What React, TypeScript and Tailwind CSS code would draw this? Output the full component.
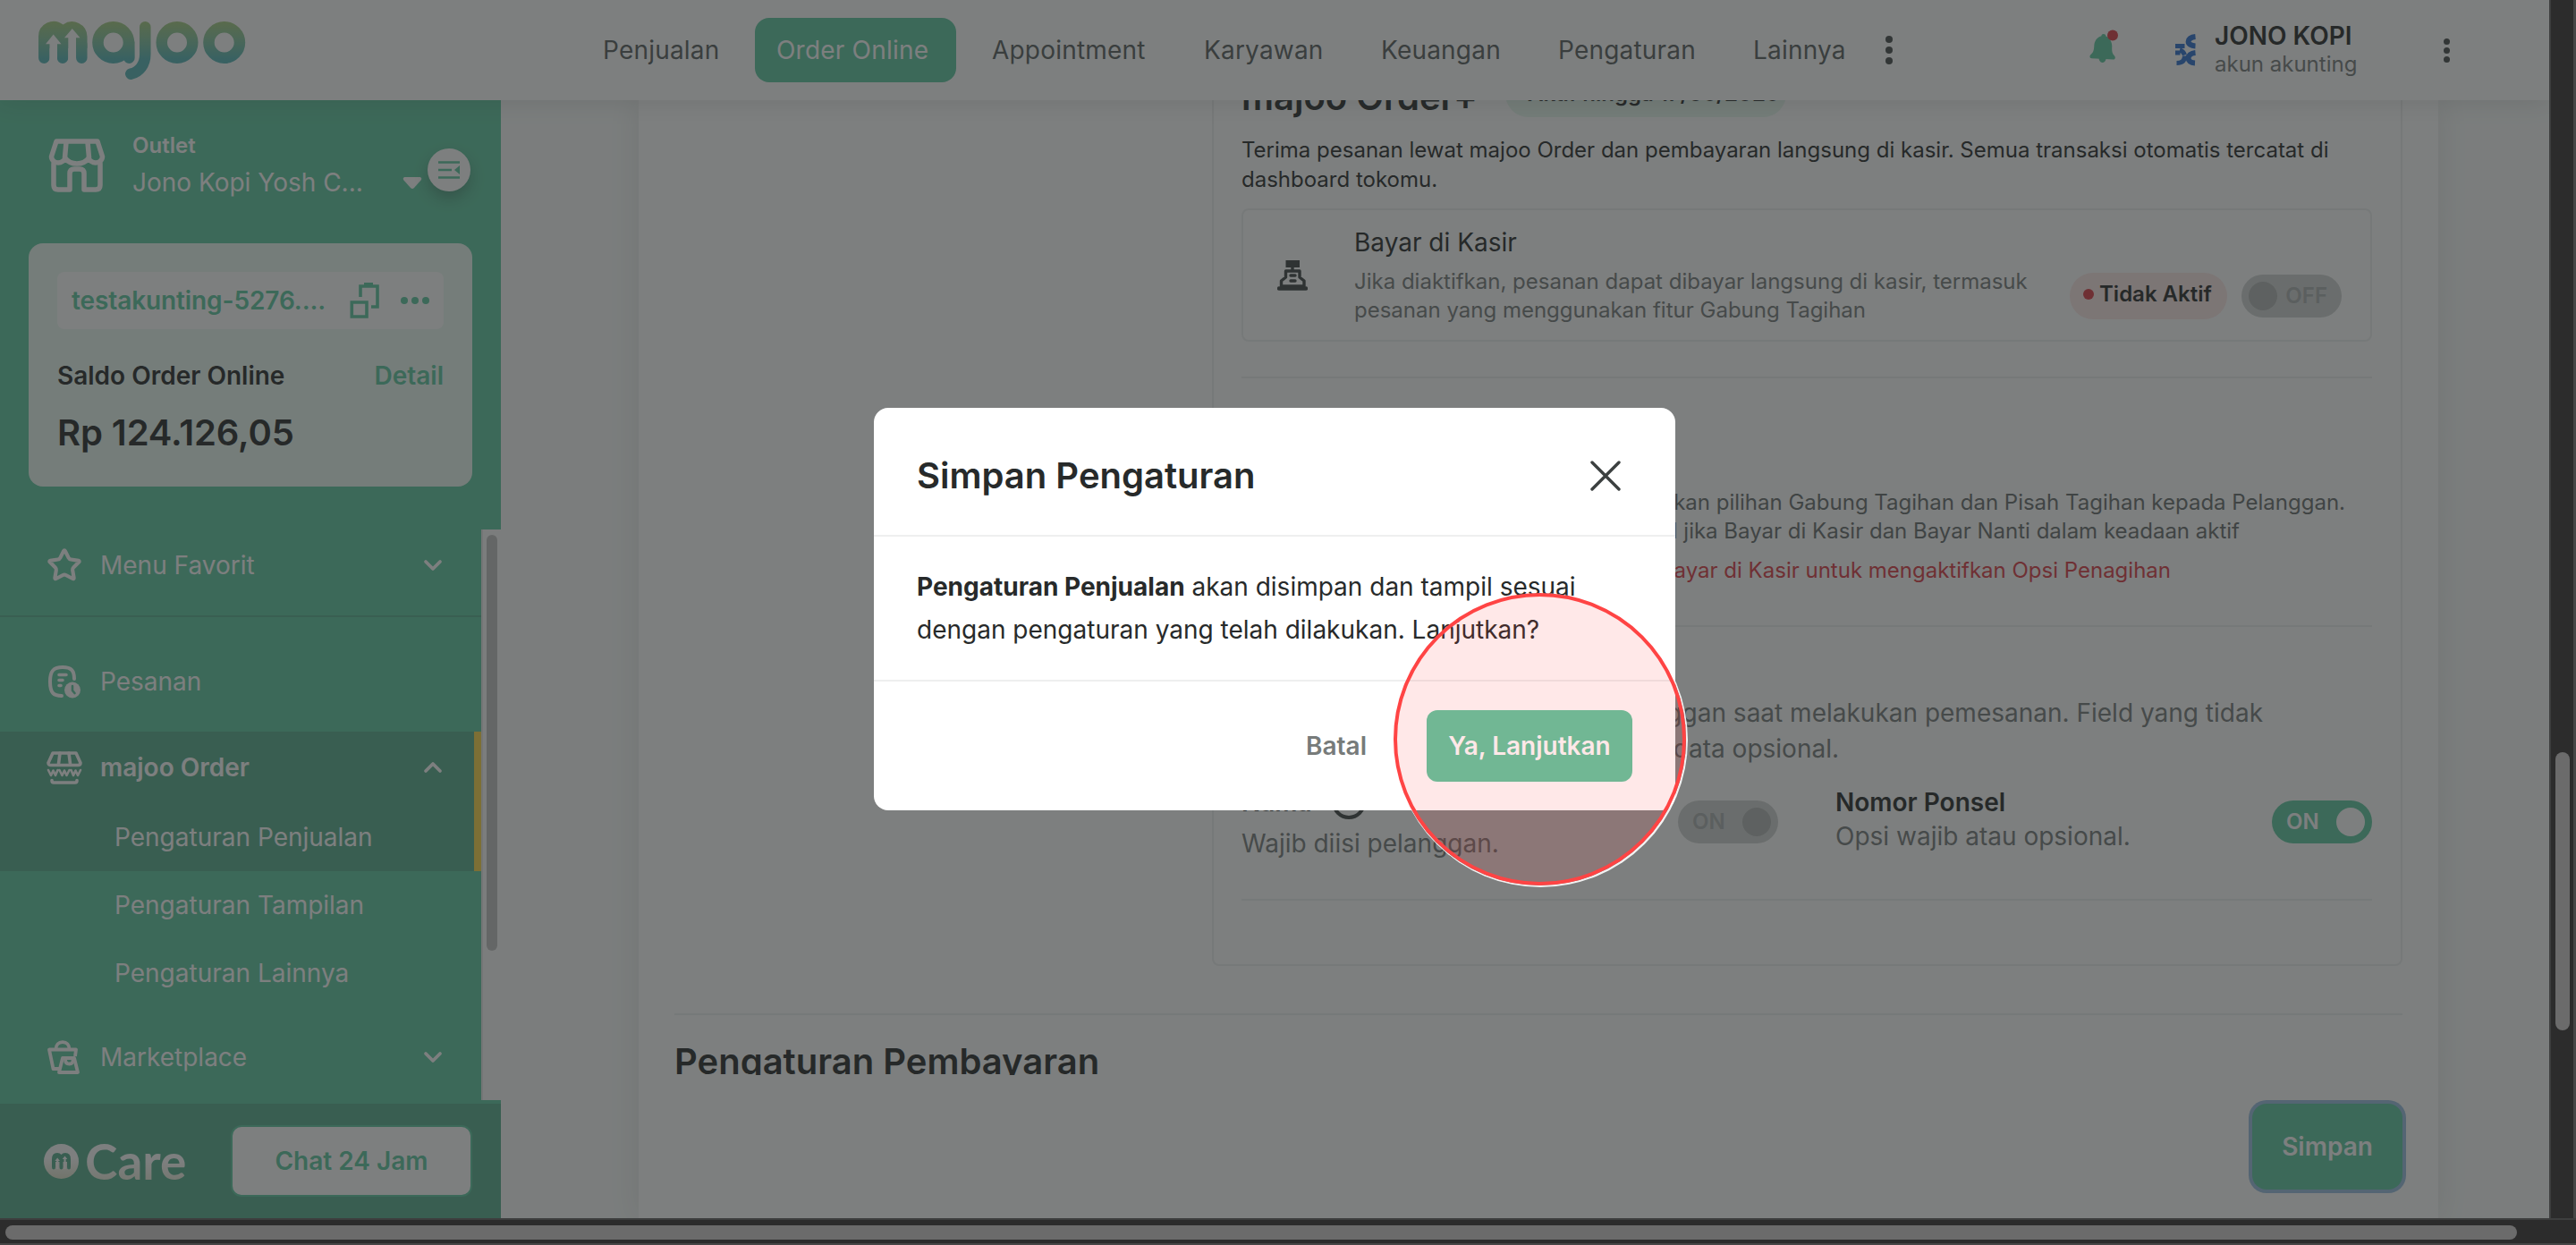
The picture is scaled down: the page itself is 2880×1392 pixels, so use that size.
import { ChevronDown, ChevronUp, Star } from "lucide-react";
import clsx from "clsx";
import type { ReactNode } from "react";

const navItems = [
  { label: "Penjualan", className: "w-[172px] pl-[2px]" },
  { label: "Order Online", active: true, className: "w-[225px] mr-10 pl-[24px]" },
  { label: "Appointment", className: "w-[237px]" },
  { label: "Karyawan", className: "w-[198px]" },
  { label: "Keuangan", className: "w-[198px]" },
  { label: "Pengaturan", className: "w-[218px]" },
  { label: "Lainnya", className: "w-[148px]" },
];

const MajooLogo = () => (
  <svg width="236" height="70" viewBox="42 22 236 70" fill="none">
    <defs>
      <linearGradient id="majoo" gradientUnits="userSpaceOnUse" x1="0" y1="24" x2="0" y2="66">
        <stop stopColor="#a6cc80" />
        <stop offset="0.450" stopColor="#86c49c" />
        <stop offset="1" stopColor="#55b5b6" />
      </linearGradient>
    </defs>
    {/* m with the two arrows cut out */}
    <path d="M43 54V41a17 17 0 0 1 27.500-13.500A17 17 0 0 1 97.500 41V54Z" fill="url(#majoo)" />
    <g stroke="url(#majoo)" strokeWidth="12.500" strokeLinecap="round">
      <path d="M49.250 50L49.300 64.700M70 50L70.050 64.700M91.250 50L91.300 64.700" />
      <circle cx="126.700" cy="47.500" r="17.250" />
      <path d="M144.300 47.500L144.400 64.700" />
      <path d="M162.300 30.200V60.500C162.300 72 156 80.500 146.300 82.700" />
      <circle cx="198" cy="47.500" r="17.250" />
      <circle cx="250.700" cy="47.500" r="17.250" />
    </g>
    <path d="M59.700 38.500L68.500 49.300H64V72H55.500V49.300H51ZM80.800 32L89.500 42.300H85V72H76.300V42.300H72Z" fill="#fff" />
  </svg>
);

const StoreIcon = () => (
  <svg width="64" height="60" viewBox="0 0 64 60" fill="none" stroke="#fff" strokeWidth="5.500" strokeLinejoin="round" strokeLinecap="round">
    <path d="M9 3H55L60.500 20C60.500 24 57 27 53 27C49 27 46 24 45 22C42 26 38 28 32 28C26 28 22 26 19 22C18 24 15 27 11 27C7 27 3.500 24 3.500 20Z" />
    <path d="M20 4L18.500 21M44 4L45.500 21" />
    <path d="M6 28V52Q6 57 11 57H24V39Q24 34 29 34H35Q40 34 40 39V57H53Q58 57 58 52V28" />
  </svg>
);

const OrdersIcon = () => (
  <svg width="40" height="40" viewBox="0 0 40 40" fill="none" stroke="#fff" strokeWidth="4" strokeLinecap="round">
    <path d="M17 36C8 36 4 33 4 20C4 8 8 4 18 4C28 4 31 8 31 17" />
    <path d="M14 12.500H22M14 18.500H18M14 24.500H16" strokeWidth="3.600" />
    <circle cx="29" cy="29.500" r="9" fill="#fff" stroke="none" />
    <path d="M29 25V30L31.500 33" stroke="#5ec8a0" strokeWidth="2.600" />
  </svg>
);

const WebShopIcon = () => (
  <svg width="40" height="38" viewBox="0 0 40 38" fill="none" stroke="#fff" strokeWidth="3.600" strokeLinejoin="round" strokeLinecap="round">
    <path d="M7 3H33L38 14Q38 16.500 35 16.500H5Q2 16.500 2 14Z" />
    <path d="M15 3L13.500 15M25 3L26.500 15" />
    <path d="M2 22L5 28L7.500 22.500L10 28L12.500 22M14.500 22L17.500 28L20 22.500L22.500 28L25.500 22M27.500 22L30 28L32.500 22.500L35 28L38 22" strokeWidth="2.600" />
    <path d="M6 33.500Q6 36 8 36H32Q34 36 34 33.500" />
  </svg>
);

const MarketIcon = () => (
  <svg width="38" height="38" viewBox="0 0 38 38" fill="none" stroke="#fff" strokeWidth="3.800" strokeLinejoin="round">
    <path d="M10.500 10.500C10.500 5 13.500 2.200 18 2.200S25.500 5 25.500 10.500" />
    <path d="M16 32H7.500L3 10.500H33L32 18" />
    <path d="M18 20H31L35 36H14Z" />
    <path d="M21 21.500Q21 26.500 25.500 26.500T29.500 21.500" />
  </svg>
);

const CashierIcon = () => (
  <svg width="34" height="34" viewBox="0 0 34 34" fill="none" stroke="#3c4342" strokeWidth="3.400" strokeLinejoin="round">
    <path d="M9.500 0H25V8H9.500Z" fill="#3c4342" stroke="none" />
    <path d="M17 8V12M9.500 12H25V19L30 23V29H4.500V23L9.500 19Z" />
    <path d="M15 17H20M15 23H20" strokeLinecap="round" />
    <path d="M2 31.500H32" strokeWidth="4.500" strokeLinecap="round" />
  </svg>
);

const CopyLinkIcon = () => (
  <svg width="34" height="40" viewBox="0 0 34 40" fill="none" stroke="#5ec8a0" strokeWidth="3.600">
    <path d="M12 16V4H31V27H24" />
    <path d="M16 2.500H26" strokeWidth="5" />
    <path d="M2.300 22H19V38H2.300Z" />
  </svg>
);

const BellIcon = () => (
  <svg width="34" height="42" viewBox="0 0 34 42">
    <g transform="rotate(3 15 24)">
      <path d="M15 5C13.500 5 12.500 6 12.500 7.300C7 9 5 14 5 19C5 25 4 26.500 1.500 29C0 31 1 33 3 33H27C29 33 30 31 28.500 29C26 26.500 25 25 25 19C25 14 22.500 9 17.500 7.300C17.500 6 16.500 5 15 5Z" fill="#5ec8a0" />
      <path d="M11 32a4 5 0 0 0 8 0Z" fill="#5ec8a0" />
    </g>
    <circle cx="26" cy="6.500" r="6" fill="#dc3a44" />
  </svg>
);

const OutletLogo = () => (
  <svg width="24" height="38" viewBox="0 0 24 38" fill="none" stroke="#2b6fd0" strokeWidth="6">
    <path d="M22.500 4C12 5 12 14 22.500 14.500M22.500 22C12 23 12 33 22 33.500" />
    <path d="M0 14.500H10.500" strokeWidth="5" />
    <path d="M0 22H5.500M10.500 25.500C10.500 31 7 33.500 1.500 33.500M5 19Q9 20 10.500 24.500" strokeWidth="5" />
  </svg>
);

const Toggle = ({ label, on, muted }: { label: string; on?: boolean; muted?: boolean }) => (
  <div
    className={clsx(
      "flex h-12 w-[112px] shrink-0 items-center justify-between rounded-full text-[24px] font-semibold",
      on ? "pl-4 pr-2" : "flex-row-reverse pl-2 pr-4",
      muted ? "bg-[#d0d3d2] text-[#abaeae]" : "bg-[#5ec8a0] text-white",
    )}
  >
    <span>{label}</span>
    <span className={clsx("size-8 rounded-full", muted ? "bg-[#b1b4b3]" : "bg-white")} />
  </div>
);

const Dots = ({ size }: { size: "sm" | "lg" }) => (
  <div className={clsx("flex flex-col items-center", size === "lg" ? "gap-1" : "gap-[3px]")}>
    {[0, 1, 2].map((i) => (
      <span key={i} className={clsx("rounded-full bg-[#454a49]", size === "lg" ? "size-2" : "size-[7px]")} />
    ))}
  </div>
);

const Header = () => (
  <header className="relative z-10 flex h-[112px] shrink-0 items-center bg-white shadow-[0_4px_24px_rgba(39,42,42,0.12)]">
    <div className="h-[68px] w-[672px] pl-[42px]">
      <MajooLogo />
    </div>
    <nav className="flex items-center">
      {navItems.map(({ label, active, className }) => (
        <a
          key={label}
          className={clsx(
            "flex h-[72px] items-center text-[28px] tracking-[0.2px]",
            active ? "rounded-2xl bg-[#5ec8a0] text-white" : "text-[#575d5c]",
            className,
          )}
        >
          {label}
        </a>
      ))}
      <Dots size="lg" />
    </nav>
    <div className="-mt-1 ml-[220px] h-[42px] w-[96px]">
      <BellIcon />
    </div>
    <div className="flex items-center">
      <OutletLogo />
      <div className="ml-5 w-[256px]">
        <p className="text-[28px] leading-8 font-semibold text-[#272a2a]">JONO KOPI</p>
        <p className="text-[24px] leading-8 text-[#777b7a]">akun akunting</p>
      </div>
      <Dots size="sm" />
    </div>
  </header>
);

const MenuRow = ({ icon, label, bold, trailing, className }: { icon: ReactNode; label: string; bold?: boolean; trailing?: ReactNode; className?: string }) => (
  <div className={clsx("flex items-center", className)}>
    <span className="flex w-[112px] shrink-0 pl-[52px]">{icon}</span>
    <span className={clsx("w-[356px] text-[28px]", bold && "font-semibold")}>{label}</span>
    {trailing}
  </div>
);

const SubItem = ({ label }: { label: string }) => (
  <div className="flex h-[76px] items-center pl-[128px] text-[28px]">{label}</div>
);

const Sidebar = () => (
  <aside className="flex w-[560px] shrink-0 flex-col bg-[#5ec8a0] text-white">
    <div className="flex h-[160px] items-start pt-[43px] pl-[54px]">
      <StoreIcon />
      <div className="-mt-2 ml-[30px] w-[302px]">
        <p className="text-[24px] leading-8 font-semibold">Outlet</p>
        <p className="mt-[5px] text-[28px] leading-10">Jono Kopi Yosh C...</p>
      </div>
      <svg width="22" height="14" viewBox="0 0 22 14" className="mt-[43px]">
        <path d="M2 0H20Q22 1 21 3L13 12Q11 14 9 12L1 3Q0 1 2 0Z" fill="#fff" />
      </svg>
      <span className="mt-[11px] ml-[6px] flex size-12 items-center justify-center rounded-full bg-white shadow-[0_8px_16px_rgba(39,42,42,0.3)]">
        <svg width="24" height="20" viewBox="0 0 24 20" stroke="#5ec8a0" strokeWidth="2.400">
          <path d="M0 1.500H24M0 10H15M0 18.500H24" />
          <path d="M24 5V15L18 10Z" fill="#5ec8a0" stroke="none" />
        </svg>
      </span>
    </div>

    <div className="mx-8 h-[272px] shrink-0 rounded-2xl bg-[#ecf9f3] px-8 pt-8 text-[#272a2a]">
      <div className="flex h-16 items-center rounded-lg bg-white pr-4 pl-4 text-[#5ec8a0]">
        <span className="w-[311px] text-[28px] font-semibold tracking-[-0.1px]">testakunting-5276....</span>
        <CopyLinkIcon />
        <span className="ml-auto flex gap-1">
          <i className="size-2 rounded-full bg-current" />
          <i className="size-2 rounded-full bg-current" />
          <i className="size-2 rounded-full bg-current" />
        </span>
      </div>
      <div className="mt-8 flex h-10 items-center justify-between text-[28px] font-semibold">
        <span>Saldo Order Online</span>
        <span className="text-[#5ec8a0]">Detail</span>
      </div>
      <p className="mt-5 text-[40px] leading-[48px] font-semibold tracking-[-0.1px]">Rp 124.126,05</p>
    </div>

    <div className="mt-12 flex h-[638px] shrink-0">
      <div className="flex w-[538px] flex-col">
        <MenuRow className="h-[80px]" icon={<Star size={40} strokeWidth={2.500} />} label="Menu Favorit" trailing={<ChevronDown size={32} strokeWidth={2.800} />} />
        <div className="mt-[16px] h-[2px] bg-[#55b08e]" />
        <MenuRow className="mt-[32px] h-[80px]" icon={<OrdersIcon />} label="Pesanan" />
        <div className="mt-[16px] h-[156px] border-r-8 border-[#fed746] bg-[#55ad8d]">
          <MenuRow className="h-[80px]" icon={<WebShopIcon />} label="majoo Order" bold trailing={<ChevronUp size={32} strokeWidth={2.800} />} />
          <SubItem label="Pengaturan Penjualan" />
        </div>
        <SubItem label="Pengaturan Tampilan" />
        <SubItem label="Pengaturan Lainnya" />
        <MenuRow className="mt-[16px] h-[80px]" icon={<MarketIcon />} label="Marketplace" trailing={<ChevronDown size={32} strokeWidth={2.800} />} />
      </div>
      <div className="flex w-[22px] justify-center border-l-2 border-[#e9e9e9] bg-[#fafafa] pt-1.5">
        <div className="h-[465px] w-3 rounded-full bg-[#c1c1c1]" />
      </div>
    </div>

    <div className="mt-1 flex h-[128px] shrink-0 items-center bg-[#55ad8d] pr-8 pl-[49px]">
      <svg width="39" height="39" viewBox="0 0 39 39" fill="none">
        <defs>
          <linearGradient id="care" x1="0" y1="0" x2="0" y2="1">
            <stop offset="0.400" stopColor="#fff" />
            <stop offset="1" stopColor="#e2e4cd" />
          </linearGradient>
        </defs>
        <circle cx="19.500" cy="19.500" r="19.500" fill="url(#care)" />
        <path d="M9 26V17Q9 10 15 10Q18 10 19.500 12Q21 10 24 10Q30 10 30 17V26Q30 28.500 28 28.500T26 26V20H21.500V26Q21.500 28.500 19.500 28.500T17.500 26V20H13V26Q13 28.500 11 28.500T9 26Z" fill="#55ad8d" />
        <path d="M15.200 15.500L18 19H16.300V28H14.200V19H12.400ZM23.500 13.500L26.300 17H24.600V28H22.500V17H20.700Z" fill="#fff" />
      </svg>
      <span className="ml-[7px] w-[120px] bg-gradient-to-b from-white from-50% to-[#e2e4cd] bg-clip-text font-['Lato'] text-[55px] leading-[64px] font-bold text-transparent">
        Care
      </span>
      <button className="ml-auto h-20 w-[270px] rounded-xl border-2 border-[#5ec8a0] bg-white text-[28px] font-semibold text-[#5ec8a0]">
        Chat 24 Jam
      </button>
    </div>
  </aside>
);

const StatusPill = ({ label, active, className }: { label: string; active?: boolean; className: string }) => (
  <span
    className={clsx(
      "flex h-[52px] shrink-0 items-center gap-1.5 rounded-full text-[24px] font-semibold text-[#272a2a]",
      active ? "bg-[#e7f8ee]" : "bg-[#fde8e7] pb-1",
      className,
    )}
  >
    <i className={clsx("size-3 rounded-full", active ? "bg-[#40bf5c]" : "bg-[#dc3a44]")} />
    {label}
  </span>
);

const Settings = () => (
  <main className="flex flex-1 bg-[#f9fbfa] pl-[154px]">
    <div className="flex w-[2012px] flex-col overflow-hidden bg-white px-10 shadow-[0_0_32px_rgba(39,42,42,0.1)]">
      <div className="-mt-12 ml-[601px] h-[1016px] shrink-0 rounded-lg border-2 border-[#eeefef] pr-8 pl-[31px] text-[24px] leading-8 text-[#272a2a]">
        <div className="flex h-[84px] items-start pt-[11px]">
          <h2 className="w-[295px] text-[40px] leading-[64px] font-semibold">majoo Order+</h2>
          <StatusPill label="Aktif hingga 17/06/2026" active className="mt-0.5 w-[314px] pl-[7px]" />
        </div>
        <p className="mt-px leading-[33px]">
          Terima pesanan lewat majoo Order dan pembayaran langsung di kasir. Semua transaksi otomatis tercatat di
          <br />
          dashboard tokomu.
        </p>
        <div className="mt-4 flex h-[149px] items-center rounded-lg border-2 border-[#eeefef] pr-8 pl-[38px]">
          <CashierIcon />
          <div className="ml-[52px] w-[800px]">
            <p className="text-[28px] leading-9">Bayar di Kasir</p>
            <p className="mt-2.5 text-[#777b7a]">
              Jika diaktifkan, pesanan dapat dibayar langsung di kasir, termasuk
              <br />
              pesanan yang menggunakan fitur Gabung Tagihan
            </p>
          </div>
          <StatusPill label="Tidak Aktif" className="mt-[46px] w-[176px] pl-[15px]" />
          <div className="mt-[46px] ml-4">
            <Toggle label="OFF" muted />
          </div>
        </div>
        <div className="mt-[39px] h-[2px] bg-[#eeefef]" />

        <h3 className="mt-10 text-[28px] leading-10 font-semibold">Opsi Penagihan</h3>
        <div className="mt-[43px] text-right text-[#686d6c]">
          <p className="pr-[30px]">Berikan pilihan Gabung Tagihan dan Pisah Tagihan kepada Pelanggan.</p>
          <p className="pr-[148px]">Opsi ini tampil jika Bayar di Kasir dan Bayar Nanti dalam keadaan aktif</p>
          <p className="mt-3 pr-[225px] text-[#dc3a44]">Aktifkan Bayar di Kasir untuk mengaktifkan Opsi Penagihan</p>
        </div>
        <div className="mt-[45px] h-[2px] bg-[#eeefef]" />

        <div className="mt-[76px] text-right text-[28px] leading-10 text-[#777b7a]">
          <p className="pr-[122px]">Data pelanggan saat melakukan pemesanan. Field yang tidak</p>
          <p className="pr-[596px]">diaktifkan menjadi data opsional.</p>
        </div>
        <div className="mt-[21px] flex h-[76px] items-start text-[28px] leading-[38px]">
          <div className="w-[488px]">
            <p className="flex items-center gap-[22px] font-semibold">
              Nama
              <i className="size-[38px] rounded-full border-4 border-[#3c4342]" />
            </p>
            <p className="mt-2 text-[#777b7a]">Wajib diisi pelanggan.</p>
          </div>
          <div className="mt-[17px]">
            <Toggle label="ON" on muted />
          </div>
          <div className="ml-[64px] flex-1">
            <p className="font-semibold">Nomor Ponsel</p>
            <p className="text-[#777b7a]">Opsi wajib atau opsional.</p>
          </div>
          <div className="mt-[17px]">
            <Toggle label="ON" on />
          </div>
        </div>
        <div className="mt-[51px] h-[2px] bg-[#eeefef]" />
      </div>

      <div className="mt-[53px] h-[2px] shrink-0 bg-[#eeefef]" />
      <div className="h-[67px] shrink-0 overflow-hidden pt-[27px]">
        <h2 className="text-[40px] leading-[50px] font-semibold text-[#272a2a]">Pengaturan Pembayaran</h2>
      </div>
      <div className="flex h-40 shrink-0 items-start justify-end pt-8">
        <button className="h-24 w-[168px] rounded-2xl bg-[#5ec8a0] text-[28px] font-semibold text-white ring-4 ring-[#98bee1]">Simpan</button>
      </div>
    </div>
  </main>
);

const ConfirmDialog = () => (
  <div className="absolute top-[456px] left-[977px] z-30 flex h-[450px] w-[896px] flex-col rounded-2xl bg-white text-[28px] text-[#272a2a]">
    <div className="flex h-[144px] items-center justify-between border-b-2 border-[#eeefef] pt-[9px] pr-[60px] pl-12">
      <h1 className="text-[40px] font-semibold">Simpan Pengaturan</h1>
      <svg width="36" height="36" viewBox="0 0 36 36" stroke="#3c4040" strokeWidth="3.400" strokeLinecap="round">
        <path d="M3 3L33 33M33 3L3 33" />
      </svg>
    </div>
    <p className="h-[162px] border-b-2 border-[#eeefef] pt-8 pl-12 leading-[48px]">
      <b className="font-bold">Pengaturan Penjualan</b> akan disimpan dan tampil sesuai
      <br />
      dengan pengaturan yang telah dilakukan. Lanjutkan?
    </p>
    <div className="flex flex-1 items-center justify-end pr-12 font-semibold">
      <button className="mr-[67px] text-[#777b7a]">Batal</button>
      <button className="h-20 w-[230px] rounded-xl bg-[#5ec8a0] text-white">Ya, Lanjutkan</button>
    </div>
  </div>
);

export default function App() {
  return (
    <div className="relative flex h-[1392px] w-[2880px] flex-col overflow-hidden bg-[#2c2c2c] font-['Inter',sans-serif]">
      <div className="flex h-[1362px]">
        <div className="relative flex w-[2850px] flex-col overflow-hidden">
          <Header />
          <div className="flex h-[1250px]">
            <Sidebar />
            <Settings />
          </div>
          <div className="absolute inset-0 z-20 bg-[#272a2a]/60" />
          <ConfirmDialog />
          {/* click highlight around the confirm button */}
          <div className="absolute top-[663px] left-[1558px] z-40 size-[327px] rounded-full border-4 border-[#ff4444] bg-[#ff4444]/12 shadow-[1px_1px_0_1px_rgba(255,255,255,0.9)]" />
        </div>
        <div className="flex w-[30px] justify-center border-r-[3px] border-l-2 border-r-[#464646] border-l-[#3d3e3e] pt-[841px]">
          <div className="h-[311px] w-4 rounded-full bg-[#6b6b6b]" />
        </div>
      </div>
      <div className="flex h-[30px] items-end border-t-2 border-b-2 border-t-[#3d3e3e] border-b-[#464646] pb-1 pl-1.5">
        <div className="h-4 w-[2808px] rounded-full bg-[#6b6b6b]" />
      </div>
    </div>
  );
}
